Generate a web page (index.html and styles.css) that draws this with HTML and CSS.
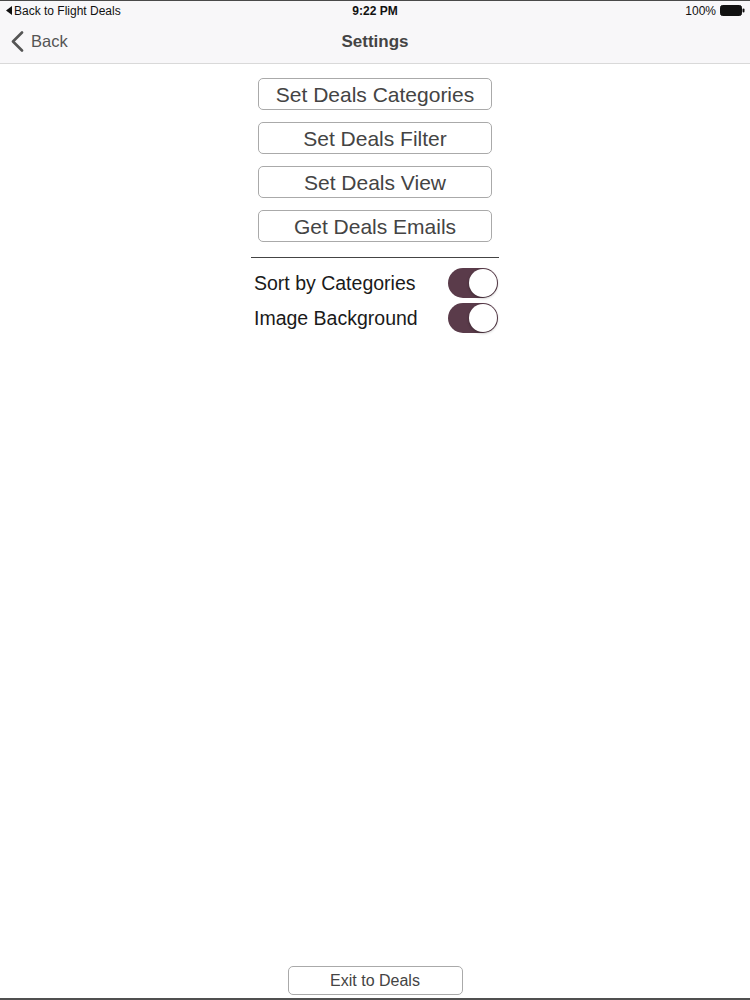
FILE: index.html
```html
<!DOCTYPE html>
<html lang="en">
<head>
    <meta charset="UTF-8">
    <meta name="viewport" content="width=device-width, initial-scale=1.0">
    <title>Settings</title>
    <link rel="stylesheet" href="styles.css">
</head>
<body>
    <div class="screen">
        <div class="status-bar">
            <div class="status-left">
                <svg class="back-arrow" width="6" height="9" viewBox="0 0 6 9"><path d="M6 0 L0 4.5 L6 9 Z" fill="#111"/></svg>
                <span>Back to Flight Deals</span>
            </div>
            <div class="status-time">9:22 PM</div>
            <div class="status-right">
                <span>100%</span>
                <svg width="25" height="11" viewBox="0 0 25 11">
                    <rect x="0.5" y="0.5" width="21" height="10" rx="2" fill="#111" stroke="#111"/>
                    <rect x="22.5" y="3.5" width="2" height="4" rx="1" fill="#111"/>
                </svg>
            </div>
        </div>

        <header class="navbar">
            <a class="nav-back" href="#">
                <svg width="13" height="21" viewBox="0 0 13 21"><path d="M11 1.5 L2 10.5 L11 19.5" fill="none" stroke="#555" stroke-width="2.6" stroke-linecap="round" stroke-linejoin="round"/></svg>
                <span>Back</span>
            </a>
            <h1>Settings</h1>
        </header>

        <main class="content">
            <div class="button-list">
                <button class="deal-btn">Set Deals Categories</button>
                <button class="deal-btn">Set Deals Filter</button>
                <button class="deal-btn">Set Deals View</button>
                <button class="deal-btn">Get Deals Emails</button>
            </div>

            <div class="options">
                <div class="option-row">
                    <span>Sort by Categories</span>
                    <div class="switch on"><div class="knob"></div></div>
                </div>
                <div class="option-row">
                    <span>Image Background</span>
                    <div class="switch on"><div class="knob"></div></div>
                </div>
            </div>
        </main>

        <footer class="footer">
            <button class="exit-btn">Exit to Deals</button>
        </footer>
    </div>
</body>
</html>
```

FILE: styles.css
```css
body {
    margin: 0;
    padding: 0;
    font-family: "Liberation Sans", Arial, sans-serif;
    background-color: #fff;
}
.screen {
    width: 750px;
    height: 1000px;
    display: flex;
    flex-direction: column;
    box-sizing: border-box;
    border-top: 1px solid #4a4a4a;
    border-bottom: 2px solid #505050;
    overflow: hidden;
}
.status-bar {
    height: 19px;
    background: #f8f7f9;
    display: flex;
    align-items: center;
    justify-content: space-between;
    padding: 0 5px 0 6px;
    font-size: 12px;
    color: #111;
    position: relative;
}
.status-left {
    display: flex;
    align-items: center;
    gap: 2px;
}
.status-time {
    position: absolute;
    left: 0;
    right: 0;
    text-align: center;
    font-weight: bold;
    pointer-events: none;
}
.status-right {
    display: flex;
    align-items: center;
    gap: 4px;
}
.navbar {
    height: 43px;
    background: #f8f7f9;
    border-bottom: 1px solid #d9d9d9;
    display: flex;
    align-items: center;
    justify-content: center;
    position: relative;
}
.navbar h1 {
    margin: 0;
    font-size: 17px;
    font-weight: bold;
    color: #444;
}
.nav-back {
    position: absolute;
    left: 11px;
    top: 11px;
    display: flex;
    align-items: center;
    gap: 7px;
    color: #555;
    font-size: 16.5px;
    text-decoration: none;
}
.content {
    flex: 1;
    display: flex;
    flex-direction: column;
    align-items: center;
}
.button-list {
    display: flex;
    flex-direction: column;
    gap: 12px;
    margin-top: 14px;
}
.deal-btn {
    width: 234px;
    height: 32px;
    background: #fff;
    border: 1px solid #aaa;
    border-radius: 5px;
    font-family: inherit;
    font-size: 21px;
    color: #444;
    padding: 1px 0 0;
}
.options {
    width: 248px;
    margin-top: 15px;
    border-top: 1px solid #444;
    padding-top: 10px;
    display: flex;
    flex-direction: column;
    gap: 5px;
}
.option-row {
    display: flex;
    align-items: center;
    justify-content: space-between;
    padding-left: 3px;
    font-size: 19.5px;
    color: #1a1a1a;
}
.switch {
    width: 50px;
    height: 30px;
    border-radius: 15px;
    background: #e5e5e5;
    position: relative;
    margin-right: 1px;
}
.switch.on {
    background: #5a3b4a;
}
.knob {
    position: absolute;
    top: 1px;
    left: 1px;
    width: 28px;
    height: 28px;
    border-radius: 50%;
    background: #fff;
    box-shadow: 0 1px 3px rgba(0, 0, 0, 0.35);
}
.switch.on .knob {
    left: 21px;
}
.footer {
    display: flex;
    justify-content: center;
    padding-bottom: 3px;
}
.exit-btn {
    width: 175px;
    height: 29px;
    background: #fff;
    border: 1px solid #aaa;
    border-radius: 5px;
    font-family: inherit;
    font-size: 16px;
    color: #444;
    padding: 0;
}
```
